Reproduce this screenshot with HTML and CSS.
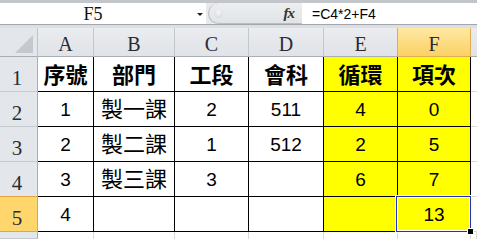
FILE: index.html
```html
<!DOCTYPE html>
<html>
<head>
<meta charset="utf-8">
<link rel="stylesheet" href="styles.css">
</head>
<body>
<div class="app">
  <div class="fbar">
    <div class="namebox"><span class="name">F5</span><span class="arrow"></span></div>
    <div class="fpanel"><span class="knob"></span><span class="fx">fx</span></div>
    <div class="formula">=C4*2+F4</div>
  </div>
  <div class="sep"></div>
  <div class="sheet">
    <div class="corner"><svg width="37" height="28" viewBox="0 0 37 28"><polygon points="15,25 33,25 33,7" fill="#c5c9cf"/></svg></div>
    <div class="hd">A</div>
    <div class="hd">B</div>
    <div class="hd">C</div>
    <div class="hd">D</div>
    <div class="hd">E</div>
    <div class="hd sel">F</div>
    <div class="hd last"></div>

    <div class="rh">1</div>
    <div class="c cjk b">序號</div>
    <div class="c cjk b">部門</div>
    <div class="c cjk b">工段</div>
    <div class="c cjk b">會科</div>
    <div class="c cjk b y">循環</div>
    <div class="c cjk b y">項次</div>
    <div class="g"></div>

    <div class="rh">2</div>
    <div class="c">1</div>
    <div class="c cjk">製一課</div>
    <div class="c">2</div>
    <div class="c">511</div>
    <div class="c y">4</div>
    <div class="c y">0</div>
    <div class="g"></div>

    <div class="rh">3</div>
    <div class="c">2</div>
    <div class="c cjk">製二課</div>
    <div class="c">1</div>
    <div class="c">512</div>
    <div class="c y">2</div>
    <div class="c y">5</div>
    <div class="g"></div>

    <div class="rh">4</div>
    <div class="c">3</div>
    <div class="c cjk">製三課</div>
    <div class="c">3</div>
    <div class="c"></div>
    <div class="c y">6</div>
    <div class="c y">7</div>
    <div class="g"></div>

    <div class="rh rsel">5</div>
    <div class="c">4</div>
    <div class="c"></div>
    <div class="c"></div>
    <div class="c"></div>
    <div class="c y"></div>
    <div class="c y">13</div>
    <div class="g"></div>

    <div class="rh"></div>
    <div class="p"></div>
    <div class="p"></div>
    <div class="p"></div>
    <div class="p"></div>
    <div class="p"></div>
    <div class="p"></div>
    <div class="p"></div>
  </div>
  <div class="selection"></div>
  <div class="handle"></div>
</div>
</body>
</html>
```

FILE: styles.css
```css
html, body {
  margin: 0;
  padding: 0;
  background: #ffffff;
}
body {
  width: 477px;
  height: 239px;
  overflow: hidden;
}
.app {
  position: relative;
  width: 477px;
  height: 239px;
}
.fbar {
  display: flex;
  height: 25px;
  box-sizing: border-box;
  border-top: 3px solid #c2c6cb;
  border-bottom: 1px solid #a3a7ad;
  background: #e7e9ec;
}
.namebox {
  width: 206px;
  background: #ffffff;
  display: flex;
  align-items: center;
}
.name {
  width: 186px;
  text-align: center;
  font: 18px "Liberation Serif", serif;
  line-height: 21px;
  color: #111;
  padding-top: 1px;
}
.arrow {
  margin-left: 11px;
  width: 0;
  height: 0;
  border-left: 3px solid transparent;
  border-right: 3px solid transparent;
  border-top: 3px solid #222;
  margin-top: 2px;
}
.fpanel {
  width: 94px;
  margin-left: 2px;
  display: flex;
  align-items: center;
  box-sizing: border-box;
  border: 1px solid #b9bdc3;
  border-right: none;
  border-top: none;
  border-radius: 11px 0 0 11px;
  background: linear-gradient(#eceef0, #e1e4e7);
}
.knob {
  width: 9px;
  height: 9px;
  border-radius: 50%;
  margin-left: 5px;
  background: radial-gradient(circle at 50% 35%, #f7f7f8, #cfd2d6);
}
.fx {
  margin-left: auto;
  margin-right: 8px;
  font: italic bold 15px "Liberation Serif", serif;
  color: #333;
  letter-spacing: -1px;
}
.formula {
  flex: 1;
  background: #ffffff;
  box-sizing: border-box;
  padding: 2px 0 0 10px;
  font: 14px "Liberation Sans", sans-serif;
  line-height: 19px;
  color: #000;
}
.sep {
  height: 3px;
  background: #dcdfe3;
}
.sheet {
  display: grid;
  grid-template-columns: 38px 56px 81px 74px 75px 74px 73px 6px;
  grid-template-rows: 29px repeat(5, 35px) 7px;
}
.sheet > div {
  box-sizing: border-box;
}
.corner {
  background: #e3e6ea;
  border-right: 1px solid #c0c4c9;
  border-bottom: 1px solid #a9aeb4;
}
.corner svg {
  display: block;
}
.hd {
  background: linear-gradient(#eaecef, #e0e3e7);
  border-right: 1px solid #c3c7cc;
  border-bottom: 1px solid #a9aeb4;
  display: flex;
  align-items: flex-end;
  justify-content: center;
  font: 20px "Liberation Serif", serif;
  color: #2a2a35;
}
.hd.sel {
  background: linear-gradient(#fee8a4, #fbd164);
  border-right-color: #e2aa52;
  border-bottom-color: #e2aa52;
  box-shadow: -1px 0 0 #e2aa52;
}
.hd.last {
  border-right: none;
}
.rh {
  background: #e3e6ea;
  border-right: 1px solid #a9aeb4;
  border-bottom: 1px solid #c6cacf;
  display: flex;
  align-items: flex-end;
  justify-content: center;
  padding-right: 3px;
  font: 21px "Liberation Serif", serif;
  color: #2a2a35;
}
.rh.rsel {
  background: #ffd66c;
  border-right-color: #e2a444;
  border-bottom-color: #e2a444;
  box-shadow: 0 -1px 0 #e2a444;
}
.c {
  border-right: 1px solid #000;
  border-bottom: 1px solid #000;
  display: flex;
  align-items: center;
  justify-content: center;
  font: 19px "Liberation Sans", sans-serif;
  line-height: 1;
  color: #000;
}
.cjk {
  font-family: "Noto Sans CJK TC", sans-serif;
  font-size: 22px;
  padding-bottom: 4px;
}
.cjk.b {
  font-weight: bold;
  padding-bottom: 2px;
}
.y {
  background: #ffff00;
}
.g {
  border-bottom: 1px solid #d9d9d9;
}
.p {
  border-right: 1px solid #d9d9d9;
}
.selection {
  position: absolute;
  left: 396px;
  top: 196px;
  width: 75px;
  height: 36px;
  box-sizing: border-box;
  border: 1px solid #1c2ee0;
  box-shadow: inset 0 0 0 1px #ffffff, 0 0 0 1px #ffffff;
}
.handle {
  position: absolute;
  left: 468px;
  top: 229px;
  width: 5px;
  height: 5px;
  box-sizing: border-box;
  background: #000;
  outline: 1px solid #ffffff;
}
```
